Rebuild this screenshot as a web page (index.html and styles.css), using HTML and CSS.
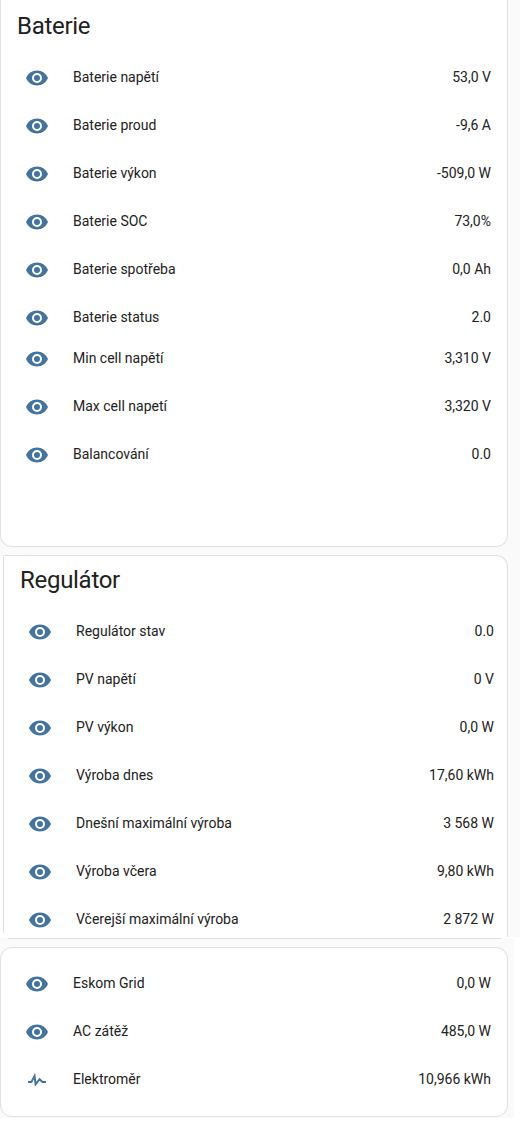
FILE: index.html
```html
<!DOCTYPE html>
<html lang="cs">
<head>
<meta charset="utf-8">
<title>Baterie</title>
<link rel="stylesheet" href="styles.css">
</head>
<body>
<svg class="symbols" aria-hidden="true">
  <symbol id="eye" viewBox="0 0 24 24"><path d="M12,9A3,3 0 0,0 9,12A3,3 0 0,0 12,15A3,3 0 0,0 15,12A3,3 0 0,0 12,9M12,17A5,5 0 0,1 7,12A5,5 0 0,1 12,7A5,5 0 0,1 17,12A5,5 0 0,1 12,17M12,4.5C7,4.5 2.73,7.61 1,12C2.73,16.39 7,19.5 12,19.5C17,19.5 21.27,16.39 23,12C21.27,7.61 17,4.5 12,4.5Z"/></symbol>
  <symbol id="pulse" viewBox="0 0 24 24"><path d="M3,13H5.79L10.1,4.79L11.28,13.75L14.5,9.66L17.83,13H21V15H17L14.67,12.67L9.92,18.73L8.94,11.31L7,15H3V13Z"/></symbol>
</svg>
<section class="panel panel-battery">
  <div class="card card-battery">
    <h1>Baterie</h1>
    <div class="row"><svg><use href="#eye"/></svg><span>Baterie napětí</span><b>53,0 V</b></div>
    <div class="row"><svg><use href="#eye"/></svg><span>Baterie proud</span><b>-9,6 A</b></div>
    <div class="row"><svg><use href="#eye"/></svg><span>Baterie výkon</span><b>-509,0 W</b></div>
    <div class="row"><svg><use href="#eye"/></svg><span>Baterie SOC</span><b>73,0%</b></div>
    <div class="row"><svg><use href="#eye"/></svg><span>Baterie spotřeba</span><b>0,0 Ah</b></div>
    <div class="row row-short"><svg><use href="#eye"/></svg><span>Baterie status</span><b>2.0</b></div>
    <div class="row"><svg><use href="#eye"/></svg><span>Min cell napětí</span><b>3,310 V</b></div>
    <div class="row"><svg><use href="#eye"/></svg><span>Max cell napetí</span><b>3,320 V</b></div>
    <div class="row"><svg><use href="#eye"/></svg><span>Balancování</span><b>0.0</b></div>
  </div>
</section>
<section class="panel panel-regulator">
  <div class="card card-regulator">
    <h1>Regulátor</h1>
    <div class="row"><svg><use href="#eye"/></svg><span>Regulátor stav</span><b>0.0</b></div>
    <div class="row"><svg><use href="#eye"/></svg><span>PV napětí</span><b>0 V</b></div>
    <div class="row"><svg><use href="#eye"/></svg><span>PV výkon</span><b>0,0 W</b></div>
    <div class="row"><svg><use href="#eye"/></svg><span>Výroba dnes</span><b>17,60 kWh</b></div>
    <div class="row"><svg><use href="#eye"/></svg><span>Dnešní maximální výroba</span><b>3 568 W</b></div>
    <div class="row"><svg><use href="#eye"/></svg><span>Výroba včera</span><b>9,80 kWh</b></div>
    <div class="row row-last"><svg><use href="#eye"/></svg><span>Včerejší maximální výroba</span><b>2 872 W</b></div>
  </div>
</section>
<section class="panel panel-grid">
  <div class="edge"></div>
  <div class="card card-grid">
    <div class="row"><svg><use href="#eye"/></svg><span>Eskom Grid</span><b>0,0 W</b></div>
    <div class="row"><svg><use href="#eye"/></svg><span>AC zátěž</span><b>485,0 W</b></div>
    <div class="row"><svg><use href="#pulse"/></svg><span>Elektroměr</span><b>10,966 kWh</b></div>
  </div>
</section>
</body>
</html>
```
FILE: styles.css
```css
* { box-sizing: border-box; }
body {
  margin: 0;
  width: 520px;
  height: 1132px;
  overflow: hidden;
  background: #fff;
  color: #212121;
  font: 14px/20px Roboto, "Noto Sans", sans-serif;
}
.symbols { display: none; }
.panel { background: #fafafa; }
.card {
  width: 508px;
  background: #fff;
  border: 1px solid #e0e0e0;
}
h1 {
  margin: 0;
  height: 48px;
  font-size: 24px;
  line-height: 48px;
  font-weight: 400;
  letter-spacing: -0.288px;
}
.row {
  display: flex;
  align-items: center;
  height: 48px;
  padding: 0 16px 0 24px;
}
.row svg {
  width: 24px;
  height: 24px;
  margin-right: 24px;
  fill: #44739e;
}
.row span { flex: 1; }
.row b { font-weight: 400; }
.row span, .row b {
  white-space: nowrap;
  padding-bottom: 2px;
}
.row-short { height: 41px; padding-bottom: 0; align-items: flex-start; padding-top: 12px; }
.row-short span, .row-short b { padding-top: 1px; }

.panel-battery { height: 555px; }
.card-battery {
  height: 547px;
  padding-top: 2px;
  border-top: 0;
  border-radius: 0 0 12px 12px;
}
.card-battery h1 { margin: 0 0 4px 16px; }

.panel-regulator {
  height: 382px;
  background: linear-gradient(#fff, #fff) 0 1px / 8px 381px no-repeat #fafafa;
}
.card-regulator {
  width: 505px;
  height: 382px;
  margin-left: 3px;
  padding-left: 1px;
  border-left: 0;
  border-bottom: 0;
  border-radius: 2px 12px 0 0;
  background: linear-gradient(#e0e0e0, #e0e0e0) 0 0 / 1px 377px no-repeat #fff;
}
.card-regulator h1 { margin: 0 0 4px 16px; }
.card-regulator .row { padding-right: 13px; }
.card-regulator .row-last { height: 37px; align-items: flex-start; padding-top: 12px; }
.card-regulator .row-last span, .card-regulator .row-last b { padding-top: 1px; }

.panel-grid {
  width: 514px;
  height: 181px;
  background: linear-gradient(#fff 0 1px, #fafafa 1px);
}
.edge {
  height: 2px;
  margin: 0 13px 0 8px;
  background: linear-gradient(#fff 0 1px, #e0e0e0 1px);
}
.card-grid {
  height: 170px;
  margin-top: 8px;
  padding-top: 12px;
  border-radius: 12px;
}
```
